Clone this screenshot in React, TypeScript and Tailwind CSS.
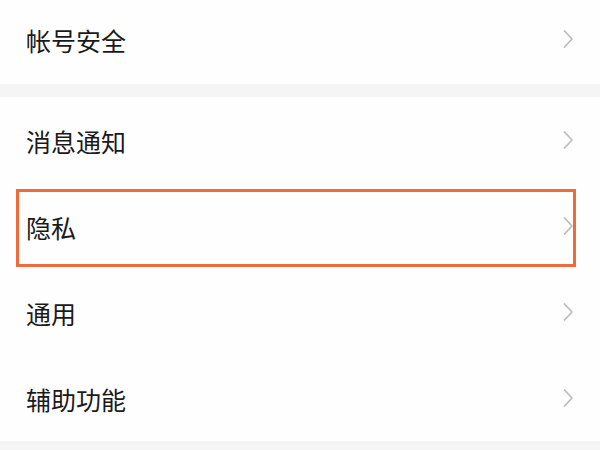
const Chevron = () => (
  <svg width="12" height="20" viewBox="0 0 12 20" fill="none" className="shrink-0">
    <path d="M2.5 2 L10 10 L2.5 18" stroke="#bcbcbc" strokeWidth="1.8" strokeLinecap="round" strokeLinejoin="round" />
  </svg>
)

type RowProps = {
  label: string
  height: string
  highlight?: boolean
}

const Row = ({ label, height, highlight }: RowProps) => (
  <div className={`relative flex items-center justify-between pl-[26px] pr-[26px] ${height}`}>
    <span className="text-[25px] leading-none text-[#1a1a1a] pt-[3px]">{label}</span>
    <Chevron />
    {highlight && (
      <div className="absolute left-[16px] right-[24px] top-[6px] bottom-[2px] border-[3.5px] border-[#f06a3b]" />
    )}
  </div>
)

export default function App() {
  return (
    <div
      className="w-[600px] h-[450px] overflow-hidden bg-[#f5f5f5]"
      style={{ fontFamily: '"Noto Sans CJK SC", "Noto Sans", sans-serif' }}
    >
      <div className="bg-[#fefefe]">
        <div className="-mt-[7px]">
          <Row label="帐号安全" height="h-[91px]" />
        </div>
      </div>
      <div className="h-[13px] bg-[#f5f5f5]" />
      <div className="bg-[#fefefe]">
        <Row label="消息通知" height="h-[86px]" />
        <Row label="隐私" height="h-[86px]" highlight />
        <Row label="通用" height="h-[86px]" />
        <Row label="辅助功能" height="h-[86px]" />
      </div>
    </div>
  )
}
